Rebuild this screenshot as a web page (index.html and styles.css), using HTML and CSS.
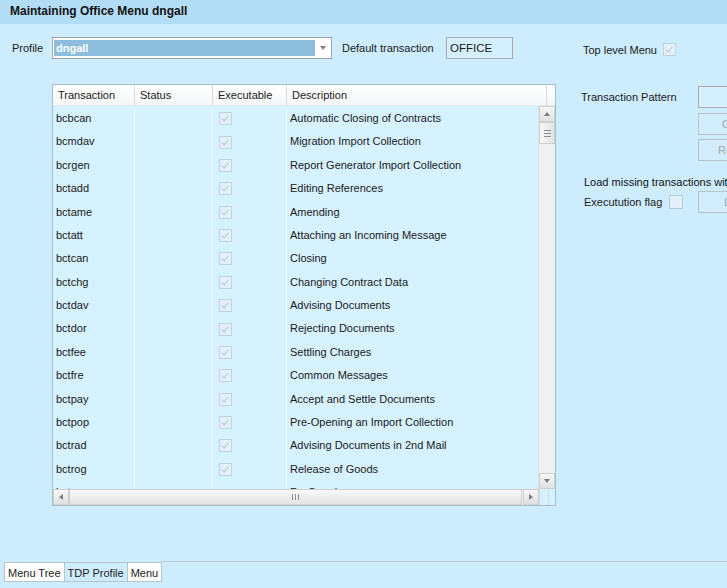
FILE: index.html
```html
<!DOCTYPE html>
<html lang="en">
<head>
    <meta charset="UTF-8">
    <title>Maintaining Office Menu</title>
    <link rel="stylesheet" href="styles.css">
</head>
<body>
    <!-- Title bar -->
    <div class="title-bar">Maintaining Office Menu dngall</div>

    <!-- Profile row -->
    <div class="top-row">
        <span class="lbl lbl-profile">Profile</span>
        <div class="select">
            <span class="select-value">dngall</span>
            <span class="select-btn"><span class="tri-down"></span></span>
        </div>
        <span class="lbl lbl-default">Default transaction</span>
        <div class="text-input input-office">OFFICE</div>
        <span class="lbl lbl-top">Top level Menu</span>
        <span class="chk chk-on chk-top"></span>
    </div>

    <!-- Main area -->
    <div class="main">
        <div class="grid">
            <div class="grid-head">
                <div class="hcell c1">Transaction</div>
                <div class="hcell c2">Status</div>
                <div class="hcell c3">Executable</div>
                <div class="hcell c4">Description</div>
                <div class="hcell c5"></div>
            </div>
            <div class="grid-mid">
                <div class="grid-body" id="rows"></div>
                <div class="vscroll">
                    <div class="sb-btn"><span class="tri-up"></span></div>
                    <div class="vthumb"><span class="grip-h"></span></div>
                    <div class="sb-track"></div>
                    <div class="sb-btn"><span class="tri-down"></span></div>
                </div>
            </div>
            <div class="grid-foot">
                <div class="hscroll">
                    <div class="sb-btn"><span class="tri-left"></span></div>
                    <div class="hthumb"><span class="grip-v"></span></div>
                    <div class="sb-btn"><span class="tri-right"></span></div>
                </div>
                <div class="corner"></div>
            </div>
        </div>

        <div class="side">
            <div class="side-row">
                <span class="lbl lbl-pattern">Transaction Pattern</span>
                <div class="text-input input-pattern"></div>
            </div>
            <div class="side-btn btn-go">Go</div>
            <div class="side-btn btn-reset">Reset</div>
            <div class="side-text">Load missing transactions with</div>
            <div class="side-row flag-row">
                <span class="lbl lbl-flag">Executution flag</span>
                <span class="chk"></span>
                <div class="side-btn btn-load">Load</div>
            </div>
        </div>
    </div>

    <!-- Bottom tabs -->
    <div class="tabs">
        <div class="tab">Menu Tree</div>
        <div class="tab tab-active">TDP Profile</div>
        <div class="tab">Menu</div>
        <div class="tab-fill"></div>
    </div>

    <script>
        var rows = [
            ["bcbcan", "Automatic Closing of Contracts"],
            ["bcmdav", "Migration Import Collection"],
            ["bcrgen", "Report Generator Import Collection"],
            ["bctadd", "Editing References"],
            ["bctame", "Amending"],
            ["bctatt", "Attaching an Incoming Message"],
            ["bctcan", "Closing"],
            ["bctchg", "Changing Contract Data"],
            ["bctdav", "Advising Documents"],
            ["bctdor", "Rejecting Documents"],
            ["bctfee", "Settling Charges"],
            ["bctfre", "Common Messages"],
            ["bctpay", "Accept and Settle Documents"],
            ["bctpop", "Pre-Opening an Import Collection"],
            ["bctrad", "Advising Documents in 2nd Mail"],
            ["bctrog", "Release of Goods"],
            ["bctrop", "Re-Opening"]
        ];
        var body = document.getElementById("rows");
        rows.forEach(function (r, i) {
            var last = i === rows.length - 1;
            body.innerHTML +=
                '<div class="row">' +
                '<div class="cell c1">' + r[0] + '</div>' +
                '<div class="cell c2"></div>' +
                '<div class="cell c3">' + (last ? '' : '<span class="chk chk-on"></span>') + '</div>' +
                '<div class="cell c4">' + r[1] + '</div>' +
                '</div>';
        });
    </script>
</body>
</html>
```

FILE: styles.css
```css
body {
    font-family: "Liberation Sans", Arial, sans-serif;
    font-size: 11px;
    color: #1a1a1a;
    margin: 0;
    padding: 0;
    height: 588px;
    overflow: hidden;
    background-color: #cdecfe;
    display: flex;
    flex-direction: column;
}

.title-bar {
    height: 24px;
    line-height: 23px;
    padding-left: 10px;
    background-color: #b3ddf6;
    font-size: 12px;
    font-weight: bold;
    color: #111;
    flex: none;
}

.lbl {
    white-space: nowrap;
}

/* top row */
.top-row {
    display: flex;
    align-items: center;
    height: 22px;
    margin-top: 13px;
    padding-left: 12px;
    flex: none;
}
.lbl-profile {
    width: 40px;
}
.select {
    width: 277px;
    height: 20px;
    border: 1px solid #a5a5a5;
    background-color: #fff;
    display: flex;
    align-items: center;
    padding-left: 1px;
}
.select-value {
    width: 259px;
    height: 16px;
    line-height: 16px;
    padding-left: 2px;
    background-color: #8cbddc;
    color: #fff;
    font-weight: bold;
}
.select-btn {
    width: 14px;
    height: 18px;
    margin-left: 1px;
    display: flex;
    align-items: center;
    justify-content: center;
}
.lbl-default {
    margin-left: 10px;
    width: 104px;
}
.text-input {
    height: 20px;
    line-height: 20px;
    border: 1px solid #a9a9a9;
    background-color: #d4efff;
    padding-left: 3px;
    box-sizing: content-box;
}
.input-office {
    width: 62px;
    font-size: 11.5px;
}
.lbl-top {
    margin-left: 70px;
    margin-top: 4px;
    width: 80px;
}
.chk-top {
    margin-top: 3px;
}

/* checkboxes */
.chk {
    display: inline-block;
    width: 11px;
    height: 11px;
    border: 1px solid #c3d3de;
    background-color: #e1f0f9;
    position: relative;
}
.chk-on::after {
    content: "";
    position: absolute;
    left: 3px;
    top: 1px;
    width: 3px;
    height: 6px;
    border-right: 1.5px solid #b7c7d2;
    border-bottom: 1.5px solid #b7c7d2;
    transform: rotate(40deg);
}

/* main */
.main {
    display: flex;
    margin-top: 25px;
    padding-left: 52px;
    flex: none;
}

.grid {
    width: 502px;
    border: 1px solid #a7bccb;
    display: flex;
    flex-direction: column;
    background-color: #d6f1ff;
}
.grid-head {
    display: flex;
    height: 21px;
    background: linear-gradient(#ffffff, #f4f6f7);
    border-bottom: 1px solid #e3e9ed;
    box-sizing: border-box;
}
.hcell {
    height: 21px;
    line-height: 21px;
    padding-left: 5px;
    border-right: 1px solid #d6dde2;
    box-sizing: border-box;
    color: #222;
}
.c1 { width: 82px; }
.c2 { width: 78px; }
.c3 { width: 74px; }
.c4 { width: 260px; }
.hcell.c5 {
    width: 8px;
    border-right: none;
}

.grid-mid {
    display: flex;
    height: 383px;
}
.grid-body {
    flex: 1;
    overflow: hidden;
    padding-top: 1px;
}
.row {
    display: flex;
    height: 23.375px;
    width: 494px;
}
.cell {
    line-height: 23px;
    padding-left: 3px;
    border-right: 1px solid #e9f6fd;
    box-sizing: border-box;
    white-space: nowrap;
    overflow: hidden;
    flex: none;
}
.cell.c3 {
    padding-left: 6px;
    display: flex;
    align-items: center;
}
.cell.c4 {
    border-right: none;
}

/* scrollbars */
.vscroll {
    width: 16px;
    display: flex;
    flex-direction: column;
    background-color: #f0f0f0;
    border-left: 1px solid #e2e2e2;
}
.sb-btn {
    width: 16px;
    height: 16px;
    box-sizing: border-box;
    border: 1px solid #cfcfcf;
    background: linear-gradient(#f7f7f7, #e0e0e0);
    display: flex;
    align-items: center;
    justify-content: center;
    flex: none;
}
.vthumb {
    height: 20px;
    border: 1px solid #cfcfcf;
    background: linear-gradient(90deg, #f7f7f7, #e3e3e3);
    display: flex;
    align-items: center;
    justify-content: center;
}
.sb-track {
    flex: 1;
}
.grip-h {
    width: 7px;
    height: 5px;
    border-top: 1px solid #8e8e8e;
    border-bottom: 1px solid #8e8e8e;
    position: relative;
}
.grip-h::after {
    content: "";
    position: absolute;
    left: 0;
    right: 0;
    top: 2px;
    border-top: 1px solid #8e8e8e;
}

.grid-foot {
    display: flex;
    height: 16px;
}
.hscroll {
    flex: 1;
    display: flex;
    background-color: #f0f0f0;
}
.hthumb {
    flex: 1;
    border: 1px solid #cfcfcf;
    background: linear-gradient(#f9f9f9, #e3e3e3);
    display: flex;
    align-items: center;
    justify-content: center;
    margin-right: 1px;
}
.grip-v {
    width: 5px;
    height: 6px;
    border-left: 1px solid #8e8e8e;
    border-right: 1px solid #8e8e8e;
    position: relative;
}
.grip-v::after {
    content: "";
    position: absolute;
    top: 0;
    bottom: 0;
    left: 2px;
    border-left: 1px solid #8e8e8e;
}
.corner {
    width: 16px;
    background-color: #d6f1ff;
    border-left: 1px solid #d6dde2;
    box-sizing: border-box;
    position: relative;
}
.corner::after {
    content: "";
    position: absolute;
    top: 0;
    bottom: 0;
    left: 8px;
    border-left: 1px solid #d6dde2;
}

.tri-down, .tri-up, .tri-left, .tri-right {
    width: 0;
    height: 0;
}
.tri-down {
    border-left: 3px solid transparent;
    border-right: 3px solid transparent;
    border-top: 4px solid #7d7d7d;
}
.tri-up {
    border-left: 3px solid transparent;
    border-right: 3px solid transparent;
    border-bottom: 4px solid #7d7d7d;
}
.tri-left {
    border-top: 3px solid transparent;
    border-bottom: 3px solid transparent;
    border-right: 4px solid #7d7d7d;
}
.tri-right {
    border-top: 3px solid transparent;
    border-bottom: 3px solid transparent;
    border-left: 4px solid #7d7d7d;
}

/* right side */
.side {
    margin-left: 25px;
    padding-top: 2px;
    display: flex;
    flex-direction: column;
    white-space: nowrap;
}
.side-row {
    display: flex;
    align-items: center;
}
.lbl-pattern {
    width: 117px;
}
.input-pattern {
    width: 60px;
    flex: none;
}
.side-btn {
    width: 74px;
    height: 20px;
    line-height: 20px;
    border: 1px solid #b5c3cc;
    background-color: #d2eefe;
    color: #9aa4aa;
    flex: none;
    box-sizing: content-box;
}
.btn-go {
    margin-left: 117px;
    margin-top: 5px;
    padding-left: 23px;
}
.btn-reset {
    margin-left: 117px;
    margin-top: 4px;
    padding-left: 19px;
}
.side-text {
    margin-top: 14px;
    padding-left: 3px;
    height: 14px;
    line-height: 14px;
    color: #111;
}
.flag-row {
    margin-top: 2px;
    padding-left: 3px;
}
.lbl-flag {
    width: 85px;
}
.flag-row .chk {
    width: 12px;
    height: 12px;
    border-color: #b7c7d2;
}
.btn-load {
    margin-left: 15px;
    padding-left: 25px;
}

/* tabs */
.tabs {
    margin-top: auto;
    margin-bottom: 6px;
    display: flex;
    padding-left: 4px;
    height: 21px;
    flex: none;
}
.tab {
    height: 20px;
    line-height: 20px;
    padding: 0 3px;
    border: 1px solid #b9c5cc;
    border-right: none;
    background-color: #fff;
    color: #222;
    font-size: 11px;
    margin-top: 1px;
    box-sizing: border-box;
}
.tab-active {
    background-color: #cdecfe;
}
.tab:nth-child(3) {
    border-right: 1px solid #b9c5cc;
}
.tab-fill {
    flex: 1;
    border-top: 1px solid #c3d0d8;
}
```
